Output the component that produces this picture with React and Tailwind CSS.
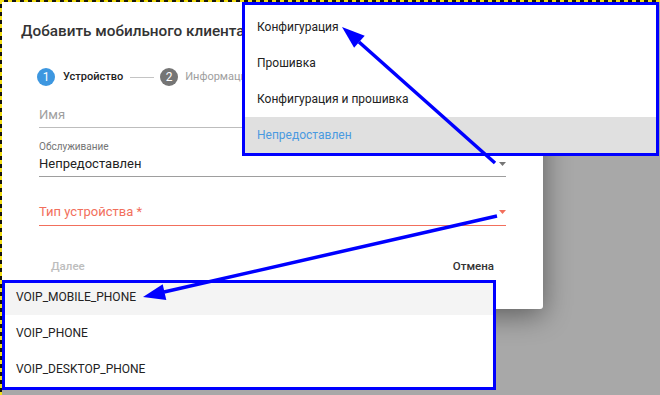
const topOptions = ['Конфигурация', 'Прошивка', 'Конфигурация и прошивка'];
const deviceTypes = ['VOIP_PHONE', 'VOIP_DESKTOP_PHONE'];

function Caret({ color }) {
  return (
    <svg width="7" height="4" viewBox="0 0 7 4" className="mb-[6px]">
      <polygon points="0,0 7,0 3.5,4" fill={color} />
    </svg>
  );
}

export default function App() {
  return (
    <div className="relative w-[660px] h-[395px] overflow-hidden bg-[#a8a8a8] font-['Roboto',sans-serif]">
      {/* dialog */}
      <div className="w-[543px] h-[309px] bg-white rounded-br-[3px] shadow-[0_6px_28px_rgba(0,0,0,0.45)]">
        <div className="pt-[22px] pl-[21px] text-[15.3px] leading-[19px] font-medium text-[#333]">
          Добавить мобильного клиента
        </div>

        <div className="pl-[37px] pr-[37px]">
          {/* stepper */}
          <div className="mt-[27px] flex items-center h-[18px] text-[11px]">
            <div className="w-[18px] h-[18px] rounded-full bg-[#3d97e0] text-white flex items-center justify-center text-[12px]">1</div>
            <span className="ml-[8px] font-medium text-[#222]">Устройство</span>
            <div className="ml-[7px] w-[24px] h-px bg-[#c4c4c4]" />
            <div className="ml-[6px] w-[18px] h-[18px] rounded-full bg-[#757575] text-white flex items-center justify-center text-[12px]">2</div>
            <span className="ml-[7px] text-[#9e9e9e]">Информация</span>
          </div>

          <div className="pl-[2px]">
            {/* name */}
            <div className="mt-[21px] pb-[4px] border-b border-[#bdbdbd] text-[13px] leading-[16px] text-[#9e9e9e]">
              Имя
            </div>

            {/* service */}
            <div className="mt-[13px] border-b border-[#9e9e9e]">
              <div className="text-[10px] leading-[12px] text-[#757575]">Обслуживание</div>
              <div className="mt-[3px] pb-[4px] flex items-end justify-between text-[13px] leading-[16px] text-[#222]">
                <span>Непредоставлен</span>
                <Caret color="#757575" />
              </div>
            </div>

            {/* type */}
            <div className="mt-[27px] pb-[5px] flex items-end justify-between border-b border-[#f26f5c] text-[13px] leading-[16px] text-[#f26f5c]">
              <span>Тип устройства *</span>
              <Caret color="#f26f5c" />
            </div>

            {/* actions */}
            <div className="mt-[33px] flex justify-between px-[12px] text-[11.5px] leading-[14px] font-medium">
              <span className="text-[#bdbdbd]">Далее</span>
              <span className="text-[#333]">Отмена</span>
            </div>
          </div>
        </div>
      </div>

      {/* service menu */}
      <div className="absolute left-[242px] top-[2px] w-[417px] bg-white border-[3px] border-[#0000ff] pt-[4px]">
        {topOptions.map((o) => (
          <div key={o} className="h-[36px] flex items-center pl-[12px] text-[12px] text-[#222]">{o}</div>
        ))}
        <div className="h-[36px] flex items-center pl-[12px] text-[12px] bg-[#e0e0e0] text-[#4a9ae0]">Непредоставлен</div>
      </div>

      {/* device type menu */}
      <div className="absolute left-[2px] top-[280px] w-[494px] bg-white border-[3px] border-[#0000ff]">
        <div className="h-[32px] pb-[4px] flex items-center pl-[11px] text-[12px] text-[#222] bg-[#f4f4f4]">VOIP_MOBILE_PHONE</div>
        {deviceTypes.map((o) => (
          <div key={o} className="h-[36px] flex items-center pl-[11px] text-[12px] text-[#222]">{o}</div>
        ))}
      </div>

      {/* annotation arrows */}
      <svg className="absolute inset-0 pointer-events-none" width="660" height="395">
        <line x1="495" y1="163" x2="359" y2="42" stroke="#0000ff" strokeWidth="3.5" />
        <polygon points="342,27 364.7,35.7 354.1,47.7" fill="#0000ff" />
        <line x1="497" y1="216" x2="164" y2="292" stroke="#0000ff" strokeWidth="3.5" />
        <polygon points="143,297 162.7,284.3 166.3,299.9" fill="#0000ff" />
      </svg>

      {/* selection marquee */}
      <div className="absolute left-0 top-0 w-full h-[2px] bg-[repeating-linear-gradient(90deg,#f5e11a_0,#f5e11a_4px,#111_4px,#111_8px)]" />
      <div className="absolute left-0 top-0 w-[2px] h-full bg-[repeating-linear-gradient(180deg,#f5e11a_0,#f5e11a_4px,#111_4px,#111_8px)]" />
    </div>
  );
}
